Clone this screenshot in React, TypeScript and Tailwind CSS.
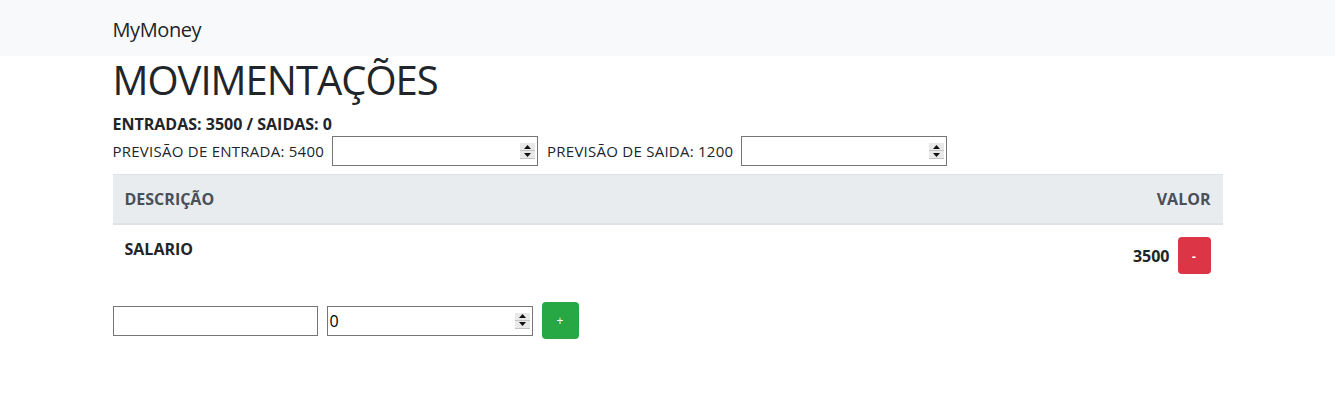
import React from "react";

function Spinner() {
  return (
    <span className="pointer-events-none absolute right-[3px] top-1/2 -translate-y-1/2 flex flex-col w-[15px] h-[16px] bg-[#e9e9e9] border-b border-[#c4c4c4]">
      <span className="flex-1 flex items-center justify-center border-b border-[#c4c4c4]">
        <svg width="7" height="4" viewBox="0 0 7 4">
          <path d="M3.5 0 L7 4 L0 4 Z" fill="#111" />
        </svg>
      </span>
      <span className="flex-1 flex items-center justify-center">
        <svg width="7" height="4" viewBox="0 0 7 4">
          <path d="M0 0 L7 0 L3.5 4 Z" fill="#111" />
        </svg>
      </span>
    </span>
  );
}

function NumberInput({ value, className }: { value?: string; className?: string }) {
  return (
    <div className={"relative " + (className ?? "")}>
      <input
        type="number"
        defaultValue={value}
        className="w-full h-[30px] border border-[#767676] bg-white px-[2px] text-[16px] text-black outline-none [appearance:textfield] [&::-webkit-inner-spin-button]:appearance-none"
      />
      <Spinner />
    </div>
  );
}

export default function App() {
  return (
    <div className="min-h-screen bg-white text-[#212529] font-['Open_Sans',sans-serif]">
      <nav className="h-14 bg-[#f8f9fa] flex items-center">
        <div className="w-[1110px] mx-auto pt-[3px]">
          <span className="text-[20px] leading-[30px] tracking-[-0.4px]">MyMoney</span>
        </div>
      </nav>

      <div className="w-[1110px] mx-auto">
        <h1 className="text-[40px] leading-[48px] font-medium tracking-[-1px] mb-2">MOVIMENTAÇÕES</h1>
        <div className="text-[16px] leading-6 font-bold">ENTRADAS: 3500 / SAIDAS: 0</div>

        <div className="flex items-center h-[30px] text-[15px] tracking-[0.25px]">
          <span>PREVISÃO DE ENTRADA: 5400</span>
          <NumberInput className="ml-[8px] w-[206px]" />
          <span className="ml-[9px]">PREVISÃO DE SAIDA: 1200</span>
          <NumberInput className="ml-[8px] w-[206px]" />
        </div>

        <table className="w-full mt-2 mb-4 border-collapse text-[16px]">
          <thead>
            <tr className="bg-[#e9ecef] text-[#495057]">
              <th className="text-left font-bold px-3 py-3 leading-6 border-t border-[#dee2e6] border-b-2">DESCRIÇÃO</th>
              <th className="text-right font-bold px-3 py-3 leading-6 border-t border-[#dee2e6] border-b-2">VALOR</th>
            </tr>
          </thead>
          <tbody>
            <tr>
              <td className="align-top px-3 py-3 leading-6 font-bold border-t border-[#dee2e6]">SALARIO</td>
              <td className="align-top px-3 py-3 font-bold border-t border-[#dee2e6]">
                <div className="flex items-center justify-end gap-2">
                  <span>3500</span>
                  <button className="w-[33px] h-[37px] rounded bg-[#dc3545] text-white text-[12px] leading-none pt-[3px]">-</button>
                </div>
              </td>
            </tr>
          </tbody>
        </table>

        <div className="flex items-center gap-[9px]">
          <input
            type="text"
            className="w-[205px] h-[30px] border border-[#767676] bg-white px-[2px] outline-none"
          />
          <NumberInput value="0" className="w-[206px]" />
          <button className="w-[37px] h-[37px] rounded bg-[#28a745] text-white text-[12px] leading-none">+</button>
        </div>
      </div>
    </div>
  );
}
